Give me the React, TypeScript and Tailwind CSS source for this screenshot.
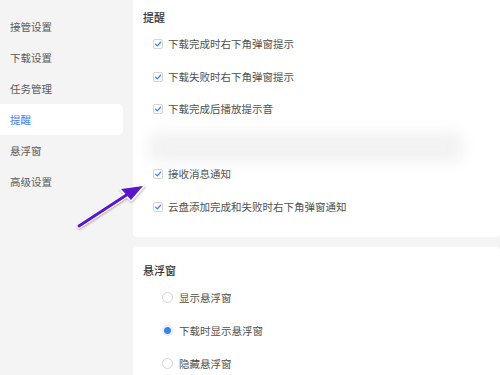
import React from "react";

const font = { fontFamily: '"Noto Sans CJK SC", "Noto Sans", sans-serif' };

function Check({ label }: { label: string }) {
  return (
    <div className="flex h-[32.5px] items-center pl-[20px]">
      <span className="flex h-[10px] w-[10px] items-center justify-center rounded-[2px] border border-[#d4d4d4] bg-white">
        <svg width="8" height="8" viewBox="0 0 10 10">
          <path d="M2 5.2 L4.2 7.3 L8.2 2.8" fill="none" stroke="#3b7ff5" strokeWidth="1.6" strokeLinecap="round" strokeLinejoin="round" />
        </svg>
      </span>
      <span className="ml-[5px] text-[10.5px] text-[#505050]">{label}</span>
    </div>
  );
}

function Radio({ label, on }: { label: string; on?: boolean }) {
  return (
    <div className="flex h-[33px] items-center pl-[29px]">
      <span
        className={
          on
            ? "flex h-[11px] w-[11px] items-center justify-center rounded-full border border-[#dfe7f7] bg-white"
            : "h-[11px] w-[11px] rounded-full border border-[#d4d4d4] bg-white"
        }
      >
        {on && <span className="h-[7px] w-[7px] rounded-full bg-[#3b7ff5]" />}
      </span>
      <span className="ml-[6px] text-[10.5px] text-[#505050]">{label}</span>
    </div>
  );
}

export default function App() {
  const items = ["接管设置", "下载设置", "任务管理", "提醒", "悬浮窗", "高级设置"];
  return (
    <div className="relative flex h-[375px] w-[500px] overflow-hidden bg-[#f4f4f4]" style={font}>
      <div className="flex w-[133px] shrink-0 flex-col pt-[11px]">
        {items.map((t) => (
          <div
            key={t}
            className={
              t === "提醒"
                ? "flex h-[31px] w-[123px] items-center rounded-r-[5px] bg-white pl-[10px] text-[10.5px] text-[#3b7ff5]"
                : "flex h-[31px] w-[123px] items-center pl-[10px] text-[10.5px] text-[#5a5a5a]"
            }
          >
            {t}
          </div>
        ))}
      </div>
      <div className="flex flex-1 flex-col gap-[10px]">
        <div className="rounded-b-[4px] bg-white pb-[14px] pt-[6px]">
          <div className="flex h-[22px] items-center pl-[10px] text-[11px] font-medium text-[#333]">提醒</div>
          <Check label="下载完成时右下角弹窗提示" />
          <Check label="下载失败时右下角弹窗提示" />
          <Check label="下载完成后播放提示音" />
          <div className="h-[32.5px] pl-[16px] pr-[36px] pt-[6px]">
            <div className="h-[30px] w-[314px] rounded-[8px] bg-[#f2f2f2] blur-[7px]" />
          </div>
          <Check label="接收消息通知" />
          <Check label="云盘添加完成和失败时右下角弹窗通知" />
        </div>
        <div className="flex-1 rounded-t-[4px] bg-white pt-[12px]">
          <div className="flex h-[22px] items-center pl-[10px] text-[11px] font-medium text-[#333]">悬浮窗</div>
          <Radio label="显示悬浮窗" />
          <Radio label="下载时显示悬浮窗" on />
          <Radio label="隐藏悬浮窗" />
        </div>
      </div>
      <svg className="pointer-events-none absolute left-0 top-0" width="500" height="375">
        <defs>
          <filter id="sh" x="-20%" y="-20%" width="140%" height="140%">
            <feDropShadow dx="0.5" dy="1" stdDeviation="1" floodColor="#000" floodOpacity="0.35" />
          </filter>
        </defs>
        <g filter="url(#sh)">
          <line x1="79" y1="226" x2="128" y2="194" stroke="#fff" strokeWidth="5" strokeLinecap="round" />
          <path d="M143 186 L121 189 L131 200 Z" fill="#fff" stroke="#fff" strokeWidth="3" strokeLinejoin="round" />
          <line x1="79" y1="226" x2="128" y2="194" stroke="#5a19c9" strokeWidth="3" strokeLinecap="round" />
          <path d="M143 186 L121 189 L131 200 Z" fill="#5a19c9" />
        </g>
      </svg>
    </div>
  );
}
